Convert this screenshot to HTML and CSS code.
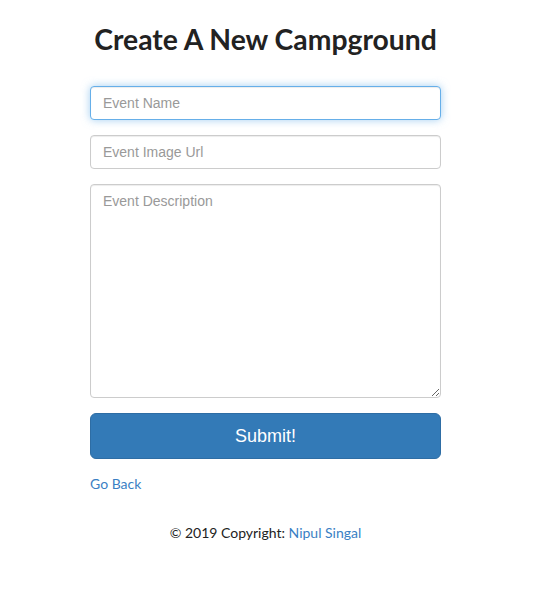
FILE: index.html
```html
<!DOCTYPE html>
<html>
<head>
<meta charset="utf-8">
<link rel="stylesheet" href="styles.css">
</head>
<body>
<div class="page">
  <h1 class="title">Create A New Campground</h1>
  <form class="form">
    <input class="field focused" type="text" placeholder="Event Name">
    <input class="field" type="text" placeholder="Event Image Url">
    <textarea class="field area" placeholder="Event Description"></textarea>
    <button class="submit" type="button">Submit!</button>
    <a class="back" href="#">Go Back</a>
  </form>
  <footer class="footer">© 2019 Copyright: <a href="#">Nipul Singal</a></footer>
</div>
</body>
</html>
```
FILE: styles.css
```css
html, body { margin: 0; padding: 0; background: #fff; }
body { font-family: Lato, "Helvetica Neue", sans-serif; font-size: 14px; color: #333; }
.page { width: 531px; display: flex; flex-direction: column; align-items: center; }
.title { font-family: Lato, sans-serif; font-weight: 700; font-size: 28.3px; color: #222; margin: 21px 0 0; line-height: 36px; }
.form { width: 351px; display: flex; flex-direction: column; gap: 15px; margin-top: 29px; }
.field {
  display: block; box-sizing: border-box; width: 100%; height: 34px;
  padding: 6px 12px; font-family: "Liberation Sans", Arial, sans-serif; font-size: 14px; line-height: 20px; color: #555;
  border: 1px solid #ccc; border-radius: 4px; background: #fff;
  box-shadow: inset 0 1px 1px rgba(0,0,0,.075); margin: 0; outline: none;
}
.field::placeholder { color: #999; }
.focused { border-color: #66afe9; box-shadow: inset 0 1px 1px rgba(0,0,0,.075), 0 0 8px rgba(102,175,233,.6); }
.area { height: 214px; resize: vertical; }
.submit {
  display: block; width: 100%; height: 46px; box-sizing: border-box;
  background: #337ab7; border: 1px solid #2e6da4; border-radius: 6px; color: #fff;
  font-family: "Liberation Sans", Arial, sans-serif; font-size: 18px; margin: 0; cursor: pointer;
}
.back { color: #3a7fc4; text-decoration: none; font-size: 14px; line-height: 20px; align-self: flex-start; }
.footer { margin-top: 29px; font-size: 14px; line-height: 20px; color: #222; }
.footer a { color: #3a7fc4; text-decoration: none; }
```
